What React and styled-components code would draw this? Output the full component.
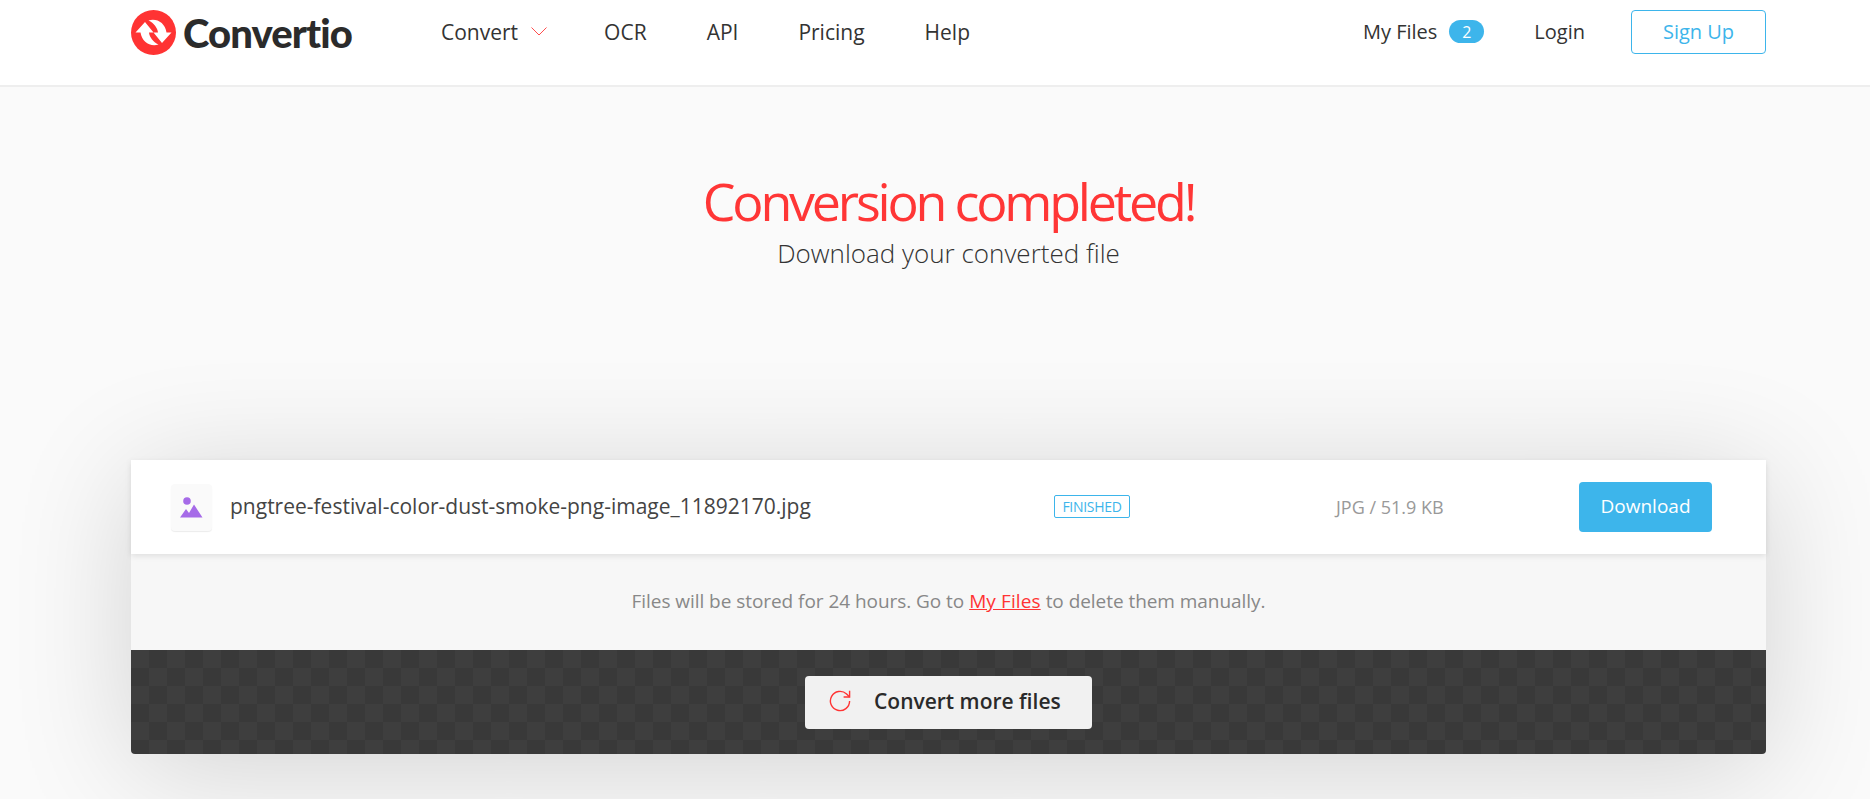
import React from "react";
import styled, { createGlobalStyle } from "styled-components";

const Global = createGlobalStyle`
  html, body {
    margin: 0;
    padding: 0;
    height: 100%;
    overflow: hidden;
    background: #fafafa;
    font-family: "Open Sans", "Liberation Sans", sans-serif;
    color: #333;
  }
`;

const Page = styled.div`
  height: 799px;
  overflow: hidden;
`;

const Header = styled.header`
  height: 63px;
  background: #fff;
  border-bottom: 2px solid #eee;
  padding: 0 104px 22px 131px;
  display: flex;
  align-items: center;
`;

const Logo = styled.a`
  display: flex;
  align-items: center;
  gap: 7px;
  width: 310px;
  margin-top: 2px;
  font-family: Lato, sans-serif;
  font-weight: 900;
  font-size: 40px;
  letter-spacing: -0.9px;
  color: #2b2b2b;
`;

const Nav = styled.nav`
  display: flex;
  align-items: center;
  gap: 60px;
  flex: 1;
`;

const NavLink = styled.a`
  font-size: ${(p) => (p.$small ? 20 : 21)}px;
  line-height: 26px;
  color: #333;
  display: flex;
  align-items: center;
  gap: 12px;
`;

const ConvertLink = styled(NavLink)`
  gap: 13px;
  margin-right: -3px;
`;

const Badge = styled.span`
  width: 35px;
  height: 23px;
  border-radius: 12px;
  background: #3db5eb;
  color: #fff;
  font-size: 16px;
  display: flex;
  align-items: center;
  justify-content: center;
`;

const Right = styled.div`
  display: flex;
  align-items: center;
  gap: 46px;
`;

const FilesLink = styled(NavLink)`
  margin-right: 4px;
`;

const SignUp = styled.a`
  box-sizing: border-box;
  width: 135px;
  height: 44px;
  border: 1px solid #3db5eb;
  border-radius: 4px;
  color: #3db5eb;
  font-size: 20px;
  display: flex;
  align-items: center;
  justify-content: center;
`;

const Hero = styled.div`
  text-align: center;
  margin: 0 104px 0 131px;
  padding-top: 82px;
  height: 373px;
  box-sizing: border-box;
`;

const Title = styled.h1`
  margin: 0;
  font-size: 52px;
  line-height: 64px;
  font-weight: 400;
  letter-spacing: -3.2px;
  color: #ff3636;
`;

const Subtitle = styled.p`
  margin: 0;
  font-size: 26px;
  line-height: 40px;
  font-weight: 300;
  color: #333;
`;

const Card = styled.section`
  margin: 0 104px 0 131px;
  border-radius: 0 0 4px 4px;
  box-shadow: 0 15px 120px rgba(0, 0, 0, 0.16);
`;

const FileRow = styled.div`
  height: 94px;
  background: #fff;
  box-shadow: 0 2px 6px rgba(0, 0, 0, 0.1);
  position: relative;
  display: flex;
  align-items: center;
  padding: 0 54px 0 40px;
`;

const FileIcon = styled.div`
  width: 41px;
  height: 47px;
  border-radius: 4px;
  background: #fafafa;
  box-shadow: 0 1px 1px rgba(0, 0, 0, 0.08);
  display: flex;
  align-items: center;
  justify-content: center;
  margin-right: 18px;
`;

const FileName = styled.div`
  font-size: 21px;
  color: #444;
  width: 824px;
  margin-top: -2px;
`;

const Status = styled.span`
  box-sizing: border-box;
  width: 76px;
  height: 23px;
  margin-top: -2px;
  border: 1px solid #3db5eb;
  border-radius: 2px;
  color: #3db5eb;
  font-size: 14px;
  letter-spacing: -0.3px;
  display: flex;
  align-items: center;
  justify-content: center;
`;

const FileSize = styled.div`
  font-size: 18px;
  color: #999;
  margin-left: 206px;
  flex: 1;
`;

const Download = styled.a`
  width: 133px;
  height: 50px;
  border-radius: 4px;
  background: #3db5eb;
  color: #fff;
  font-size: 19px;
  display: flex;
  align-items: center;
  justify-content: center;
  padding-bottom: 3px;
  box-sizing: border-box;
`;

const Notice = styled.div`
  height: 96px;
  background: #f7f7f7;
  display: flex;
  align-items: center;
  justify-content: center;
  font-size: 19px;
  letter-spacing: -0.05px;
  color: #888;
  padding-bottom: 2px;
  box-sizing: border-box;
  a {
    color: #ff3333;
    text-decoration: underline;
    margin: 0 5px;
    letter-spacing: 0.1px;
  }
`;

const Footer = styled.div`
  height: 104px;
  border-radius: 0 0 4px 4px;
  background-color: #393939;
  background-image: conic-gradient(#3e3e3e 25%, transparent 0 50%, #3e3e3e 0 75%, transparent 0);
  background-size: 36px 36px;
  background-position: 18px 0;
  display: flex;
  align-items: center;
  justify-content: center;
`;

const MoreButton = styled.a`
  width: 287px;
  height: 53px;
  border-radius: 4px;
  background: #f1f1f1;
  color: #2a2a2a;
  font-size: 21px;
  font-weight: 600;
  display: flex;
  align-items: center;
  gap: 23px;
  padding: 0 0 2px 24px;
  box-sizing: border-box;
`;

const LogoMark = () => (
  <svg width="45" height="45" viewBox="0 0 45 45">
    <circle cx="22.5" cy="22.5" r="22.5" fill="#ff3333" />
    <path d="M4.5 22.5 L14 12 L22.5 22.5 L18 22.5 C18.5 27 22 32 27.5 34.5 C19 37 11 32 9.5 22.5 Z" fill="#fff" />
    <path d="M40.5 22.5 L31 33 L22.5 22.5 L27 22.5 C26.5 18 23 13 17.5 10.5 C26 8 34 13 35.5 22.5 Z" fill="#fff" />
  </svg>
);

const Chevron = () => (
  <svg width="16" height="9" viewBox="0 0 16 9" fill="none" stroke="#ff4d4d" strokeWidth="1">
    <path d="M0.5 0.5 L8 8 L15.5 0.5" />
  </svg>
);

const ImageGlyph = () => (
  <svg width="23" height="21" viewBox="0 0 23 21" fill="#a66be8">
    <circle cx="7" cy="4" r="3.8" />
    <path d="M0 20.5 L6 12 L9 16 L14 7.5 L22.5 20.5 Z" />
  </svg>
);

const Refresh = () => (
  <svg width="22" height="22" viewBox="0 0 22 22" fill="none" stroke="#ff3333" strokeWidth="1.4">
    <path d="M20.6 11 A9.6 9.6 0 1 1 17.6 4 L20.6 7" />
    <path d="M20.6 0.8 V7 H14.6" />
  </svg>
);

export default function App() {
  return (
    <Page>
      <Global />
      <Header>
        <Logo>
          <LogoMark />
          Convertio
        </Logo>
        <Nav>
          <ConvertLink>
            Convert <Chevron />
          </ConvertLink>
          <NavLink>OCR</NavLink>
          <NavLink>API</NavLink>
          <NavLink>Pricing</NavLink>
          <NavLink>Help</NavLink>
        </Nav>
        <Right>
          <FilesLink $small>
            My Files <Badge>2</Badge>
          </FilesLink>
          <NavLink $small>Login</NavLink>
          <SignUp>Sign Up</SignUp>
        </Right>
      </Header>
      <Hero>
        <Title>Conversion completed!</Title>
        <Subtitle>Download your converted file</Subtitle>
      </Hero>
      <Card>
        <FileRow>
          <FileIcon>
            <ImageGlyph />
          </FileIcon>
          <FileName>pngtree-festival-color-dust-smoke-png-image_11892170.jpg</FileName>
          <Status>FINISHED</Status>
          <FileSize>JPG / 51.9 KB</FileSize>
          <Download>Download</Download>
        </FileRow>
        <Notice>
          Files will be stored for 24 hours. Go to <a>My Files</a> to delete them manually.
        </Notice>
        <Footer>
          <MoreButton>
            <Refresh />
            Convert more files
          </MoreButton>
        </Footer>
      </Card>
    </Page>
  );
}
